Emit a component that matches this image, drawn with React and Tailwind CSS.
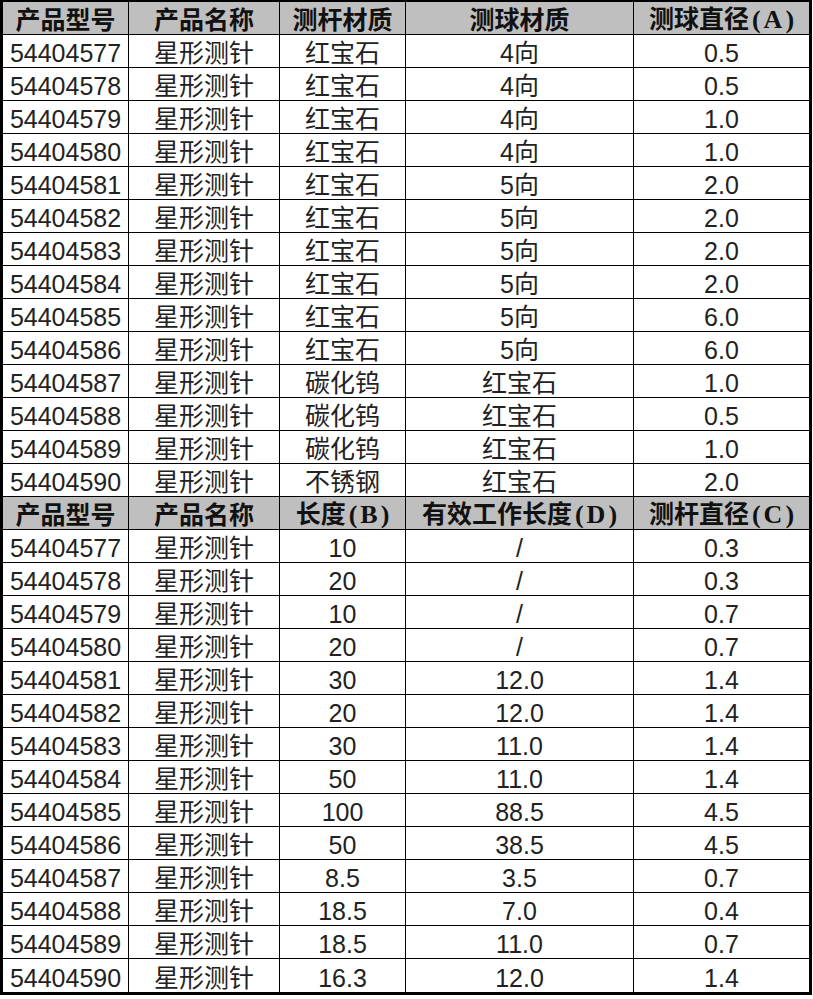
import React from 'react';

const cols = 'grid grid-cols-[126px_151px_126px_228px_175px]';
const font = { fontFamily: "'Liberation Sans', 'Noto Sans CJK SC', sans-serif" };

const specA = [
    ['54404577', '红宝石', '4向', '0.5'],
    ['54404578', '红宝石', '4向', '0.5'],
    ['54404579', '红宝石', '4向', '1.0'],
    ['54404580', '红宝石', '4向', '1.0'],
    ['54404581', '红宝石', '5向', '2.0'],
    ['54404582', '红宝石', '5向', '2.0'],
    ['54404583', '红宝石', '5向', '2.0'],
    ['54404584', '红宝石', '5向', '2.0'],
    ['54404585', '红宝石', '5向', '6.0'],
    ['54404586', '红宝石', '5向', '6.0'],
    ['54404587', '碳化钨', '红宝石', '1.0'],
    ['54404588', '碳化钨', '红宝石', '0.5'],
    ['54404589', '碳化钨', '红宝石', '1.0'],
    ['54404590', '不锈钢', '红宝石', '2.0'],
];

const specB = [
    ['54404577', '10', '/', '0.3'],
    ['54404578', '20', '/', '0.3'],
    ['54404579', '10', '/', '0.7'],
    ['54404580', '20', '/', '0.7'],
    ['54404581', '30', '12.0', '1.4'],
    ['54404582', '20', '12.0', '1.4'],
    ['54404583', '30', '11.0', '1.4'],
    ['54404584', '50', '11.0', '1.4'],
    ['54404585', '100', '88.5', '4.5'],
    ['54404586', '50', '38.5', '4.5'],
    ['54404587', '8.5', '3.5', '0.7'],
    ['54404588', '18.5', '7.0', '0.4'],
    ['54404589', '18.5', '11.0', '0.7'],
    ['54404590', '16.3', '12.0', '1.4'],
];

// header label with latin letter in brackets, e.g. 测球直径(A)
const Label = ({ text, letter }) => (
    <span className="font-bold">
        {text}
        {letter && (
            <span className="text-[26px]" style={{ fontFamily: "'Liberation Serif', serif" }}>
                <span className="mx-[3px]">(</span>{letter}<span className="ml-[3px]">)</span>
            </span>
        )}
    </span>
);

const HeaderRow = ({ labels }) => (
    <div className={`${cols} bg-[#bfbfbf] border-b border-black h-[33px]`}>
        {labels.map((l, i) => (
            <div
                key={i}
                className={`flex items-center justify-center pt-[4px] text-[25px] text-[#111] leading-none whitespace-nowrap ${i < 4 ? 'border-r border-black' : ''}`}
            >
                <Label {...l} />
            </div>
        ))}
    </div>
);

const DataRow = ({ cells, last }) => (
    <div className={`${cols} h-[33px] ${last ? '' : 'border-b border-black'}`}>
        {cells.map((c, i) => (
            <div
                key={i}
                className={`flex items-center justify-center pt-[5px] text-[25px] text-[#222] leading-none ${i < 4 ? 'border-r border-black' : ''}`}
            >
                {c}
            </div>
        ))}
    </div>
);

const App = () => {
    const headA = [
        { text: '产品型号' },
        { text: '产品名称' },
        { text: '测杆材质' },
        { text: '测球材质' },
        { text: '测球直径', letter: 'A' },
    ];
    const headB = [
        { text: '产品型号' },
        { text: '产品名称' },
        { text: '长度', letter: 'B' },
        { text: '有效工作长度', letter: 'D' },
        { text: '测杆直径', letter: 'C' },
    ];

    return (
        <div className="w-[813px] h-[999px] bg-white" style={font}>
            <div className="w-[812px] border-[3px] border-t-2 border-black">
                <HeaderRow labels={headA} />
                {specA.map(([id, stem, ball, dia]) => (
                    <DataRow key={'a' + id} cells={[id, '星形测针', stem, ball, dia]} />
                ))}
                <HeaderRow labels={headB} />
                {specB.map(([id, len, work, dia], i) => (
                    <DataRow key={'b' + id} cells={[id, '星形测针', len, work, dia]} last={i === specB.length - 1} />
                ))}
            </div>
        </div>
    );
};

export default App;
